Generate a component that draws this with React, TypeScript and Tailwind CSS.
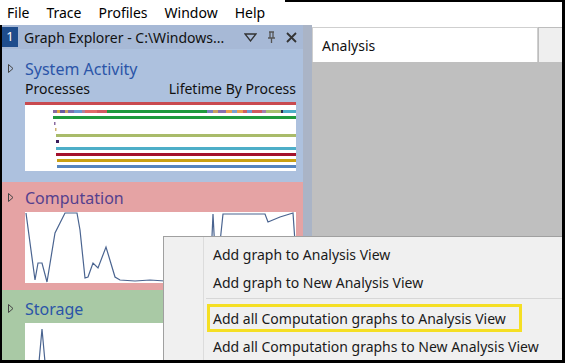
import React from 'react';

const MENU = ['File', 'Trace', 'Profiles', 'Window', 'Help'];

function Caret() {
  return (
    <svg width="6" height="9" viewBox="0 0 6 9" className="shrink-0">
      <path d="M0.5 0.5 L5 4.5 L0.5 8.5 Z" fill="none" stroke="#444" strokeWidth="1" />
    </svg>
  );
}

function SectionTitle({ label, color }: { label: string; color: string }) {
  return (
    <div className="flex h-[21px] items-center">
      <div className="w-[23px] pl-[6px]">
        <Caret />
      </div>
      <span className={`text-[16px] leading-none ${color}`}>{label}</span>
    </div>
  );
}

const BARS = [
  { y: 0, x: 0, c: '#c94a4f' },
  { y: 14, x: 28, c: '#1f9a3d' },
  { y: 32, x: 31, c: '#a9bb6a' },
  { y: 45, x: 31, c: '#4daec8' },
  { y: 51, x: 31, c: '#a4112c' },
  { y: 57, x: 32, c: '#c9a012' },
  { y: 63, x: 32, c: '#5585c0' },
];

const MULTI = [
  { x: 28, w: 4, c: '#8a6aa0' },
  { x: 32, w: 3, c: '#e0a040' },
  { x: 35, w: 5, c: '#6a5aa0' },
  { x: 40, w: 3, c: '#c8a060' },
  { x: 43, w: 6, c: '#7a70b0' },
  { x: 49, w: 8, c: '#6a9ad0' },
  { x: 57, w: 3, c: '#b080a0' },
  { x: 60, w: 12, c: '#e06a6a' },
  { x: 72, w: 10, c: '#d05a60' },
  { x: 82, w: 100, c: '#1f9a3d' },
  { x: 182, w: 6, c: '#7a80c0' },
  { x: 188, w: 5, c: '#c8a060' },
  { x: 193, w: 8, c: '#8a70b0' },
  { x: 201, w: 6, c: '#e8a050' },
  { x: 207, w: 5, c: '#7aa0d0' },
  { x: 212, w: 6, c: '#e8a050' },
  { x: 218, w: 4, c: '#d06060' },
  { x: 222, w: 5, c: '#6a9ad0' },
  { x: 227, w: 10, c: '#d05a60' },
  { x: 237, w: 4, c: '#a080b0' },
  { x: 241, w: 15, c: '#a9c070' },
  { x: 256, w: 2, c: '#2a2a4a' },
  { x: 258, w: 13, c: '#4daec8' },
];

function ProcessChart() {
  return (
    <svg width="271" height="69" className="block bg-white">
      {BARS.map((b) => (
        <rect key={b.y} x={b.x} y={b.y} width={271 - b.x} height={3} fill={b.c} />
      ))}
      {MULTI.map((m) => (
        <rect key={m.x} x={m.x} y={8} width={m.w} height={3} fill={m.c} />
      ))}
      <rect x={29} y={20} width={1.5} height={3} fill="#8a6aa0" />
      <rect x={30} y={26} width={1.5} height={3} fill="#d0b070" />
      <rect x={31} y={38} width={3} height={3} fill="#3a1a5a" />
    </svg>
  );
}

const CPU =
  '1,1 10,68 13,51 17,51 22,70 30,21 35,11 40,1 52,1 55,18 60,66 63,65 68,51 73,56 81,35 87,55 90,65 95,68 110,69 125,68 140,69 185,69 188,2 190,40 194,40 198,2 240,2 243,10 255,5 268,1 270,30';

function CpuChart() {
  return (
    <svg width="271" height="71" className="block bg-white">
      <polyline points={CPU} fill="none" stroke="#4a6490" strokeWidth="1.2" />
    </svg>
  );
}

function StorageChart() {
  return (
    <svg width="271" height="40" className="block bg-white">
      <polyline points="2,39 14,39 17,6 20,39 60,39" fill="none" stroke="#4a6490" strokeWidth="1.2" />
    </svg>
  );
}

function ContextMenu() {
  const item = 'flex h-[28px] items-center pl-[49px] text-[14px] text-[#1a1a1a]';
  return (
    <div className="absolute left-[163px] top-[236px] h-[124px] w-[399px] border-l border-t border-[#a0a0a0] bg-[#f0f0f0] pt-[3px]">
      <div className="absolute left-[39px] top-0 h-full w-px bg-[#dcdcdc]" />
      <div className={item}>Add graph to Analysis View</div>
      <div className={item}>Add graph to New Analysis View</div>
      <div className="ml-[42px] mt-[2px] mb-[5px] h-px bg-[#d7d7d7]" />
      <div className="ml-[43px] flex h-[28px] w-[315px] items-center border-[3px] border-[#f5df24] pl-[3px] text-[14px] text-[#1a1a1a]">
        Add all Computation graphs to Analysis View
      </div>
      <div className={item}>Add all Computation graphs to New Analysis View</div>
    </div>
  );
}

export default function App() {
  return (
    <div className="relative h-[363px] w-[565px] overflow-hidden border-b-[3px] border-r-[3px] border-black bg-white font-['Noto_Sans',sans-serif]">
      <div className="absolute left-[285px] top-0 h-[2px] w-[280px] bg-black" />
      <div className="flex h-[25px] items-center gap-[17px] pl-[7px] text-[14px] text-black">
        {MENU.map((m) => (
          <span key={m}>{m}</span>
        ))}
      </div>
      <div className="flex h-[335px]">
        <div className="flex w-[303px] flex-col border-l-2 border-black">
          <div className="flex h-[24px] shrink-0 items-center bg-[#a7b9d6]">
            <span className="flex h-[20px] w-[16px] items-center justify-center bg-[#1e4c8c] text-[13px] text-white">1</span>
            <span className="ml-[6px] text-[14px] text-[#111]">Graph Explorer - C:\Windows...</span>
            <span className="ml-auto flex items-center gap-[10px] pr-[6px] text-[#333]">
              <svg width="13" height="9" viewBox="0 0 13 9">
                <path d="M1 1 H12 L6.5 8 Z" fill="none" stroke="#333" strokeWidth="1.3" />
              </svg>
              <svg width="9" height="13" viewBox="0 0 9 13">
                <path d="M2 1 H7 M3 1 V7 M6 1 V7 M1 7 H8 M4.5 7 V12" fill="none" stroke="#555" strokeWidth="1.3" />
              </svg>
              <svg width="11" height="11" viewBox="0 0 11 11">
                <path d="M1 1 L10 10 M10 1 L1 10" stroke="#333" strokeWidth="1.8" />
              </svg>
            </span>
          </div>
          <div className="h-[133px] shrink-0 bg-[#adc1de] pl-[23px] pt-[9px]">
            <div className="-ml-[23px]">
              <SectionTitle label="System Activity" color="text-[#2b55a8]" />
            </div>
            <div className="flex h-[19px] w-[271px] items-center justify-between text-[14px] text-[#111]">
              <span>Processes</span>
              <span>Lifetime By Process</span>
            </div>
            <div className="mt-[4px]">
              <ProcessChart />
            </div>
          </div>
          <div className="h-[108px] shrink-0 bg-[#e5a3a4] pl-[23px] pt-[5px]">
            <div className="-ml-[23px]">
              <SectionTitle label="Computation" color="text-[#55408e]" />
            </div>
            <div className="mt-[4px]">
              <CpuChart />
            </div>
          </div>
          <div className="flex-1 bg-[#a9c9a5] pl-[23px] pt-[8px]">
            <div className="-ml-[23px]">
              <SectionTitle label="Storage" color="text-[#2b55a8]" />
            </div>
            <div className="mt-[4px]">
              <StorageChart />
            </div>
          </div>
        </div>
        <div className="w-[9px] bg-[#aab4c6]" />
        <div className="flex flex-1 flex-col">
          <div className="flex h-[37px] shrink-0 items-end bg-white">
            <div className="flex h-[35px] w-[226px] items-center border border-b-0 border-[#cfcfcf] bg-white pl-[9px] text-[14px] text-[#111]">
              Analysis
            </div>
            <div className="h-[35px] flex-1 border-l border-t border-[#bdbdbd] bg-[#efefef]" />
          </div>
          <div className="flex-1 bg-[#bfbfbf]" />
        </div>
      </div>
      <ContextMenu />
    </div>
  );
}
